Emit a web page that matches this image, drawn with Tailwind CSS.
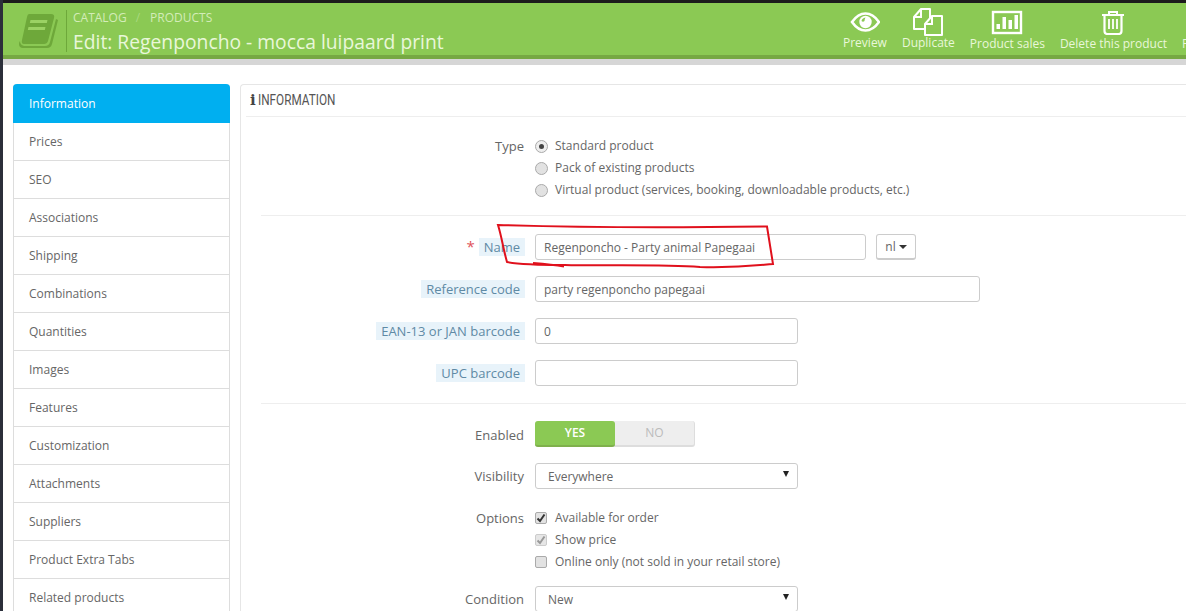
<!DOCTYPE html>
<html lang="en">
<head>
    <meta charset="UTF-8">
    <title>Edit product</title>
    <script src="https://cdn.jsdelivr.net/npm/@tailwindcss/browser@4"></script>
</head>
<body class="relative w-[1186px] h-[611px] overflow-hidden bg-white flex font-['Open_Sans',sans-serif] text-[12px] text-[#666]">

    <!-- dark window edge -->
    <div class="w-[3px] shrink-0 h-full bg-[#2b2f3a]"></div>

    <div class="flex-1 min-w-0 flex flex-col">
        <div class="h-[3px] shrink-0 bg-[#1c1c1c]"></div>

        <!-- Page header -->
        <header class="h-[56px] shrink-0 flex overflow-hidden bg-[#8bc954] border-b-4 border-[#76a843] text-[#e9f7da]">
            <div class="w-[840px] shrink-0 flex">
                <svg class="ml-[15px] mt-[9px] shrink-0" width="42" height="38" viewBox="0 0 42 38">
                    <path d="M11 2h22q4 0 3 4l-6 23q-1 3-4 3H6q-3 0-2-4L9 5q.5-3 2-3z" fill="#6ea83a"/>
                    <path d="M38 7l2 1-6 24q-1 4-5 4H5q-4 0-4-4 0-2 1-3 0 4 4 5h21q4 0 5-4z" fill="#6ea83a"/>
                    <path d="M12.500 8h17l-.7 3h-17zM10.500 15h17l-.7 3h-17z" fill="#9bd264"/>
                </svg>
                <div class="ml-[6px] mt-[7px] h-[42px] w-px bg-[#6ea83a]"></div>
                <div class="ml-[6px]">
                    <div class="mt-[8px] h-[14px] leading-[14px] text-[12px] text-[#d3ecb8] flex">
                        <span>CATALOG</span><span class="ml-[9px] text-[#a9d97f]">/</span><span class="ml-[10px]">PRODUCTS</span>
                    </div>
                    <h1 class="mt-[4px] text-[19.300px] leading-[26px] whitespace-nowrap">Edit: Regenponcho - mocca luipaard print</h1>
                </div>
            </div>

            <nav class="flex gap-[15px] shrink-0 whitespace-nowrap">
                <a class="flex flex-col items-center">
                    <svg class="mt-[9px]" width="30" height="20" viewBox="0 0 30 20">
                        <path d="M2 10Q8 1.500 15.500 1.500T29 10q-6 8.500-13.500 8.500T2 10z" fill="none" stroke="#fff" stroke-width="2.600"/>
                        <circle cx="15.500" cy="10" r="6.200" fill="#fff"/>
                        <path d="M11.500 9q.5-3 4-3.500-1 1.500-1 3.500-1.500 1.500-3 0z" fill="#8bc954"/>
                    </svg>
                    <span class="mt-[3px] leading-[16px]">Preview</span>
                </a>
                <a class="flex flex-col items-center">
                    <svg class="mt-[5px]" width="30" height="28" viewBox="0 0 30 28">
                        <path d="M8 1h9v20H1V9z" fill="none" stroke="#fff" stroke-width="2" stroke-linejoin="round"/>
                        <path d="M8 1v8H1" fill="none" stroke="#fff" stroke-width="2"/>
                        <path d="M19 8h10v19H12V16z" fill="#8bc954" stroke="#fff" stroke-width="2" stroke-linejoin="round"/>
                        <path d="M19 8v8h-7" fill="none" stroke="#fff" stroke-width="2"/>
                    </svg>
                    <span class="leading-[16px] -translate-y-[1px]">Duplicate</span>
                </a>
                <a class="flex flex-col items-center">
                    <svg class="mt-[7px]" width="32" height="25" viewBox="0 0 32 25">
                        <rect x="2" y="2" width="28" height="21" fill="none" stroke="#fff" stroke-width="2.400"/>
                        <path d="M5.500 14H9v5H5.500zM11.500 7H15v12h-3.500zM17.500 10H21v9h-3.500zM23.500 5H27v14h-3.500z" fill="#fff"/>
                    </svg>
                    <span class="mt-[1px] leading-[16px]">Product sales</span>
                </a>
                <a class="flex flex-col items-center">
                    <svg class="mt-[7px]" width="24" height="25" viewBox="0 0 24 25">
                        <path d="M1 5h22M8 5V2h8v3" fill="none" stroke="#fff" stroke-width="2"/>
                        <path d="M3.500 5v16q0 3 3 3h11q3 0 3-3V5" fill="none" stroke="#fff" stroke-width="2.200"/>
                        <path d="M8 9v10M12 9v10M16 9v10" stroke="#fff" stroke-width="1.800"/>
                    </svg>
                    <span class="mt-[1px] leading-[16px]">Delete this product</span>
                </a>
                <a class="flex flex-col items-center">
                    <span class="mt-[33px] leading-[16px]">Preferences</span>
                </a>
            </nav>
        </header>

        <div class="h-[6px] shrink-0 bg-[#d6d6d6]"></div>

        <!-- Content -->
        <div class="flex-1 min-h-0 flex items-start overflow-hidden pt-[19px] pl-[10px] gap-[10px]">

            <!-- Tabs -->
            <ul class="w-[217px] shrink-0 border-x border-[#ddd] rounded-t-[4px]">
                <li class="-mx-px h-[39px] pl-4 flex items-center bg-[#00aff0] text-white rounded-t-[4px]">Information</li>
                <li class="h-[38px] pl-[15px] flex items-center border-b border-[#ddd]">Prices</li>
                <li class="h-[38px] pl-[15px] flex items-center border-b border-[#ddd]">SEO</li>
                <li class="h-[38px] pl-[15px] flex items-center border-b border-[#ddd]">Associations</li>
                <li class="h-[38px] pl-[15px] flex items-center border-b border-[#ddd]">Shipping</li>
                <li class="h-[38px] pl-[15px] flex items-center border-b border-[#ddd]">Combinations</li>
                <li class="h-[38px] pl-[15px] flex items-center border-b border-[#ddd]">Quantities</li>
                <li class="h-[38px] pl-[15px] flex items-center border-b border-[#ddd]">Images</li>
                <li class="h-[38px] pl-[15px] flex items-center border-b border-[#ddd]">Features</li>
                <li class="h-[38px] pl-[15px] flex items-center border-b border-[#ddd]">Customization</li>
                <li class="h-[38px] pl-[15px] flex items-center border-b border-[#ddd]">Attachments</li>
                <li class="h-[38px] pl-[15px] flex items-center border-b border-[#ddd]">Suppliers</li>
                <li class="h-[38px] pl-[15px] flex items-center border-b border-[#ddd]">Product Extra Tabs</li>
                <li class="h-[38px] pl-[15px] flex items-center border-b border-[#ddd]">Related products</li>
            </ul>

            <!-- Information panel -->
            <section class="w-[1000px] shrink-0 h-[560px] border-l border-t border-[#e6e6e6] rounded-tl-[4px]">
                <div class="ml-[5px] h-[32px] border-b border-[#eee] flex items-center pl-[4px] text-[#555]">
                    <span class="font-['DejaVu_Serif',serif] font-bold text-[15px] w-[8px] text-[#444]">i</span>
                    <h2 class="font-['Roboto',sans-serif] text-[14px] origin-left scale-x-[0.84]">INFORMATION</h2>
                </div>

                <div class="mt-[18px] flex">
                    <label class="w-[283px] text-right text-[13px] leading-[22px]">Type</label>
                    <div class="ml-[11px] flex flex-col">
                        <div class="h-[22px] flex items-center gap-[7px]">
                            <span class="w-[13px] h-[13px] rounded-full border border-[#aaa] bg-[#eee] flex items-center justify-center"><span class="w-[5px] h-[5px] rounded-full bg-[#444]"></span></span>
                            <span>Standard product</span>
                        </div>
                        <div class="h-[22px] flex items-center gap-[7px]">
                            <span class="w-[13px] h-[13px] rounded-full border border-[#aaa] bg-[#e2e2e2]"></span>
                            <span>Pack of existing products</span>
                        </div>
                        <div class="h-[22px] flex items-center gap-[7px]">
                            <span class="w-[13px] h-[13px] rounded-full border border-[#aaa] bg-[#e2e2e2]"></span>
                            <span>Virtual product (services, booking, downloadable products, etc.)</span>
                        </div>
                    </div>
                </div>

                <div class="ml-[20px] mt-[14px] border-t border-[#eee]"></div>

                <div class="mt-[18px] flex items-center h-[26px]">
                    <div class="w-[284px] flex justify-end items-center">
                        <span class="text-[#e0525a] text-[15px] mr-[4px] -translate-y-[1px]">*</span>
                        <label class="text-[13px] leading-[18px] px-[5px] bg-[#e8f3fa] text-[#5f8aa5]">Name</label>
                    </div>
                    <input class="ml-[10px] w-[331px] h-[26px] px-2 border border-[#ccc] rounded-[3px] text-[#666]" value="Regenponcho - Party animal Papegaai">
                    <button class="ml-[10px] w-[40px] h-[26px] border border-[#ccc] border-b-2 rounded-[3px] flex items-center justify-center gap-[3px] text-[#666]">nl<span class="w-0 h-0 border-x-[4px] border-x-transparent border-t-[4px] border-t-[#333]"></span></button>
                </div>

                <div class="mt-[16px] flex items-center h-[26px]">
                    <div class="w-[284px] flex justify-end">
                        <label class="text-[13px] leading-[18px] px-[5px] bg-[#e8f3fa] text-[#5f8aa5]">Reference code</label>
                    </div>
                    <input class="ml-[10px] w-[445px] h-[26px] px-2 border border-[#ccc] rounded-[3px] text-[#666]" value="party regenponcho papegaai">
                </div>

                <div class="mt-[16px] flex items-center h-[26px]">
                    <div class="w-[284px] flex justify-end">
                        <label class="text-[13px] leading-[18px] px-[5px] bg-[#e8f3fa] text-[#5f8aa5]">EAN-13 or JAN barcode</label>
                    </div>
                    <input class="ml-[10px] w-[263px] h-[26px] px-2 border border-[#ccc] rounded-[3px] text-[#666]" value="0">
                </div>

                <div class="mt-[16px] flex items-center h-[26px]">
                    <div class="w-[284px] flex justify-end">
                        <label class="text-[13px] leading-[18px] px-[5px] bg-[#e8f3fa] text-[#5f8aa5]">UPC barcode</label>
                    </div>
                    <input class="ml-[10px] w-[263px] h-[26px] px-2 border border-[#ccc] rounded-[3px] text-[#666]" value="">
                </div>

                <div class="ml-[20px] mt-[17px] border-t border-[#eee]"></div>

                <div class="mt-[17px] flex items-center h-[26px]">
                    <label class="w-[283px] pt-[4px] text-right text-[13px]">Enabled</label>
                    <div class="ml-[11px] w-[160px] h-[26px] flex rounded-[3px] bg-[#eee] border-b-2 border-[#ddd] border-r border-r-[#ddd]">
                        <span class="w-[80px] -mb-[2px] rounded-[3px] bg-[#8bc954] border-b-2 border-[#7fb04c] text-white font-semibold flex items-center justify-center">YES</span>
                        <span class="flex-1 text-[#bbb] flex items-center justify-center">NO</span>
                    </div>
                </div>

                <div class="mt-[16px] flex items-center h-[26px]">
                    <label class="w-[283px] pt-[2px] text-right text-[13px]">Visibility</label>
                    <div class="ml-[11px] w-[263px] h-[26px] pl-3 pr-[8px] pt-[2px] border border-[#ccc] rounded-[3px] flex items-center justify-between text-[#666]">
                        <span>Everywhere</span><span class="w-0 h-0 -translate-y-[3px] border-x-[3.500px] border-x-transparent border-t-[6px] border-t-[#222]"></span>
                    </div>
                </div>

                <div class="mt-[18px] flex">
                    <label class="w-[283px] text-right text-[13px] leading-[22px]">Options</label>
                    <div class="ml-[11px] flex flex-col">
                        <div class="h-[22px] flex items-center gap-[8px]">
                            <span class="w-[12px] h-[12px] rounded-[2px] border border-[#aaa] bg-[#e2e2e2] flex items-center justify-center">
                                <svg width="10" height="10" viewBox="0 0 10 10"><path d="M1.500 5.500l2.500 2.500 4.500-6.500" fill="none" stroke="#333" stroke-width="2"/></svg>
                            </span>
                            <span>Available for order</span>
                        </div>
                        <div class="h-[22px] flex items-center gap-[8px]">
                            <span class="w-[12px] h-[12px] rounded-[2px] border border-[#ccc] bg-[#e6e6e6] flex items-center justify-center">
                                <svg width="10" height="10" viewBox="0 0 10 10"><path d="M1.500 5.500l2.500 2.500 4.500-6.500" fill="none" stroke="#999" stroke-width="2"/></svg>
                            </span>
                            <span>Show price</span>
                        </div>
                        <div class="h-[22px] flex items-center gap-[8px]">
                            <span class="w-[12px] h-[12px] rounded-[2px] border border-[#aaa] bg-[#e2e2e2]"></span>
                            <span>Online only (not sold in your retail store)</span>
                        </div>
                    </div>
                </div>

                <div class="mt-[13px] flex items-center h-[26px]">
                    <label class="w-[283px] pt-[2px] text-right text-[13px]">Condition</label>
                    <div class="ml-[11px] w-[263px] h-[26px] pl-3 pr-[8px] pt-[2px] border border-[#ccc] rounded-[3px] flex items-center justify-between text-[#666]">
                        <span>New</span><span class="w-0 h-0 -translate-y-[3px] border-x-[3.500px] border-x-transparent border-t-[6px] border-t-[#222]"></span>
                    </div>
                </div>
            </section>
        </div>
    </div>

    <!-- Red marker annotation drawn over the screenshot -->
    <svg class="absolute left-0 top-0 pointer-events-none" width="1186" height="611" viewBox="0 0 1186 611">
        <path d="M498 225C560 227 660 228 767 226.500L773 264C750 266 735 268 700 267C660 264 600 266 565 265C540 265 522 265 507 262C503 248 502 238 498 225z" fill="none" stroke="#e0101c" stroke-width="2"/>
        <path d="M533 263C545 264 555 265 564 266.500" fill="none" stroke="#e0101c" stroke-width="2"/>
    </svg>
</body>
</html>
